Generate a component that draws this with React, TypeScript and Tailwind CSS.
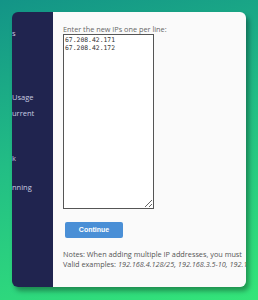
export default function App() {
  return (
    <div className="h-[300px] w-full bg-[linear-gradient(165deg,#139487_0%,#22bd85_45%,#34e579_100%)] p-3 font-['Open_Sans',sans-serif]">
      <div className="flex h-[275px] w-[234px] overflow-hidden rounded-md shadow-[3px_4px_5px_rgba(0,0,0,0.35)]">
        <div className="w-[41px] shrink-0 bg-[#20244f] text-[7.5px] leading-[10px] text-[#c9cce0]">
          <div className="mt-[16px]">s</div>
          <div className="mt-[54px]">Usage</div>
          <div className="mt-[6px]">urrent</div>
          <div className="mt-[35px]">k</div>
          <div className="mt-[19px]">nning</div>
        </div>
        <div className="flex-1 overflow-hidden bg-[#fafafa] pl-[10px] pt-[12px]">
          <div className="whitespace-nowrap text-[7.3px] leading-[10px] text-[#666]">
            Enter the new IPs one per line:
          </div>
          <textarea
            className="block h-[175px] w-[91px] resize-y border border-[#555] bg-white px-[1px] py-[1px] font-['DejaVu_Sans_Mono',monospace] text-[6.4px] leading-[8px] text-[#333] outline-none"
            defaultValue={"67.208.42.171\n67.208.42.172"}
          />
          <button className="ml-[2px] mt-[13px] flex h-[16px] w-[58px] items-center justify-center rounded-[2px] bg-[#4a8fd6] font-['Liberation_Sans',sans-serif] text-[7px] font-bold text-white">
            Continue
          </button>
          <div className="mt-[11px] whitespace-nowrap text-[7.3px] leading-[10px] text-[#555]">
            <div>Notes: When adding multiple IP addresses, you must</div>
            <div>
              Valid examples: <i>192.168.4.128/25, 192.168.3.5-10, 192.168.1.1</i>
            </div>
          </div>
        </div>
      </div>
    </div>
  );
}
